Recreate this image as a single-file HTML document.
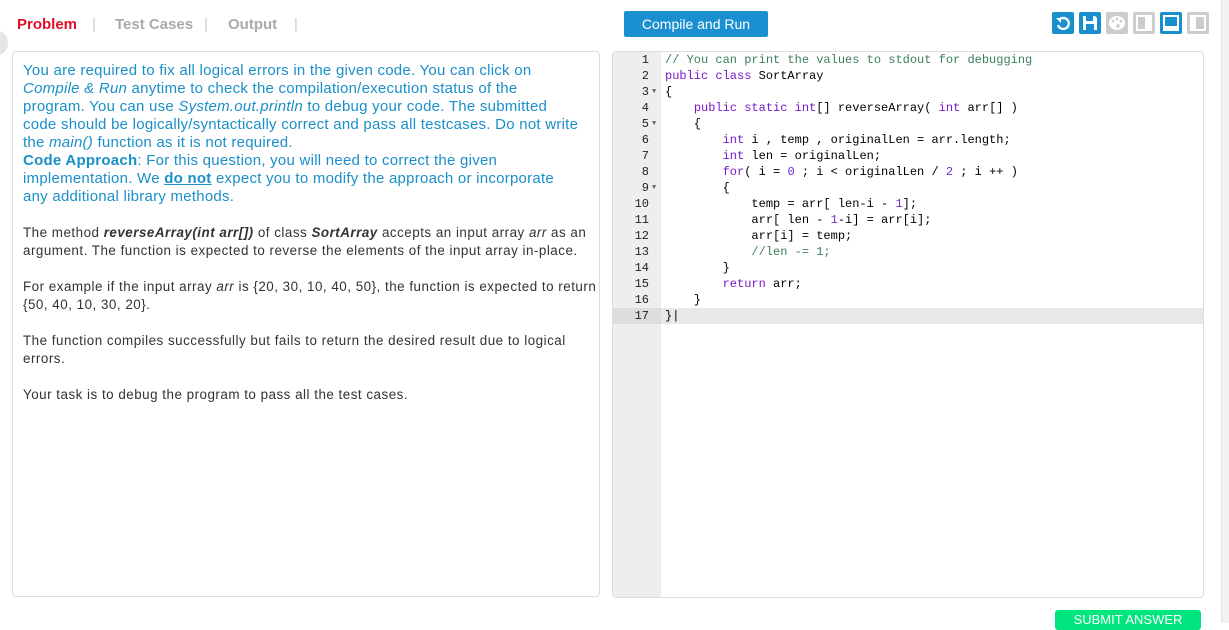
<!DOCTYPE html>
<html><head><meta charset="utf-8"><style>
*{margin:0;padding:0;box-sizing:border-box}
body{width:1229px;height:623px;overflow:hidden;background:#fff;font-family:"Liberation Sans",sans-serif;position:relative}
.tabs{position:absolute;top:16px;left:17px;font-size:15px;font-weight:bold;color:#aaa}
.tabs span{position:absolute;white-space:nowrap}
.sep{color:#ccc;font-weight:normal}
.circ{position:absolute;left:-18px;top:30px;width:26px;height:26px;border-radius:50%;background:#e6e6e6}
.btn{position:absolute;left:624px;top:11px;width:144px;height:26px;background:#1a90d0;color:#fff;font-size:14px;text-align:center;line-height:26px;border-radius:2px}
.ic{position:absolute;top:12px;width:22px;height:22px;border-radius:2px}
.left{position:absolute;left:12px;top:51px;width:588px;height:546px;border:1px solid #ddd;border-radius:4px}
.txt{position:absolute;left:23px;top:62px;font-size:15px;line-height:18px;color:#1a8fc8;white-space:nowrap;letter-spacing:0.25px}
.txt2{position:absolute;left:23px;top:224px;font-size:13.4px;line-height:18px;color:#333;white-space:nowrap;letter-spacing:0.5px}
.ed{position:absolute;left:612px;top:51px;width:592px;height:547px;border:1px solid #ddd;border-radius:4px;overflow:hidden;background:#fff}
.gut{position:absolute;left:0;top:0;width:48px;height:100%;background:#eee}
.code{position:absolute;left:0;top:0;width:100%;font-family:"Liberation Mono",monospace;font-size:12px;line-height:16px;color:#000}
.ln{height:16px;position:relative;white-space:pre}
.n{position:absolute;left:0;width:36px;text-align:right;color:#222}
.f{position:absolute;left:39px;font-size:7px;color:#666}
.c{position:absolute;left:52px;color:#000}
.k{color:#7a18c9}.cm{color:#3b7f5b}.nm{color:#6a2fd6}
.hl{background:#e8e8e8}
.hl .n{background:#ddd}
.sub{position:absolute;left:1055px;top:610px;width:146px;height:20px;background:#00e57e;border-radius:3px;color:#fff;font-size:13px;text-align:center;line-height:20px}
.rb{position:absolute;left:1221px;top:0;width:8px;height:623px;background:#f2f2f2;border-left:1px solid #e2e2e2}
</style></head><body>
<div class="circ"></div>
<div class="tabs">
<span style="left:0;color:#e0102a">Problem</span>
<span class="sep" style="left:75px">|</span>
<span style="left:98px">Test Cases</span>
<span class="sep" style="left:187px">|</span>
<span style="left:211px">Output</span>
<span class="sep" style="left:277px">|</span>
</div>
<div class="btn">Compile and Run</div>
<div class="ic" style="left:1052px;background:#1a8fd0"><svg width="22" height="22"><path d="M7 8 A5.5 5.5 0 1 1 6 13" fill="none" stroke="#fff" stroke-width="2.3"/><path d="M4 6 L9 6 L9 11 Z" fill="#fff"/></svg></div>
<div class="ic" style="left:1079px;background:#1a8fd0"><svg width="22" height="22"><path d="M4 4 H16 L18 6 V18 H4 Z" fill="#fff"/><rect x="7" y="4" width="7" height="5" fill="#1a8fd0"/><rect x="7" y="12" width="8" height="6" fill="#1a8fd0"/></svg></div>
<div class="ic" style="left:1106px;background:#ccc"><svg width="22" height="22"><ellipse cx="11" cy="11" rx="8" ry="7" fill="#fff"/><circle cx="7" cy="9" r="1.3" fill="#ccc"/><circle cx="11" cy="7" r="1.3" fill="#ccc"/><circle cx="15" cy="9" r="1.3" fill="#ccc"/><circle cx="12" cy="14" r="1.8" fill="#ccc"/></svg></div>
<div class="ic" style="left:1133px;background:#ccc"><svg width="22" height="22"><rect x="4" y="4" width="14" height="14" fill="none" stroke="#fff" stroke-width="2"/><rect x="12" y="4" width="6" height="14" fill="#fff"/></svg></div>
<div class="ic" style="left:1160px;background:#1a8fd0"><svg width="22" height="22"><rect x="4" y="4" width="14" height="14" fill="none" stroke="#fff" stroke-width="2"/><rect x="4" y="14" width="14" height="4" fill="#fff"/></svg></div>
<div class="ic" style="left:1187px;background:#ccc"><svg width="22" height="22"><rect x="4" y="4" width="14" height="14" fill="none" stroke="#fff" stroke-width="2"/><rect x="4" y="4" width="5" height="14" fill="#fff"/></svg></div>

<div class="left"></div>
<div class="txt">You are required to fix all logical errors in the given code. You can click on<br><i>Compile &amp; Run</i> anytime to check the compilation/execution status of the<br>program. You can use <i>System.out.println</i> to debug your code. The submitted<br>code should be logically/syntactically correct and pass all testcases. Do not write<br>the <i>main()</i> function as it is not required.<br><b>Code Approach</b>: For this question, you will need to correct the given<br>implementation. We <b><u>do not</u></b> expect you to modify the approach or incorporate<br>any additional library methods.</div>
<div class="txt2">The method <b><i>reverseArray(int arr[])</i></b> of class <b><i>SortArray</i></b> accepts an input array <i>arr</i> as an<br>argument. The function is expected to reverse the elements of the input array in-place.<br><br>For example if the input array <i>arr</i> is {20, 30, 10, 40, 50}, the function is expected to return<br>{50, 40, 10, 30, 20}.<br><br>The function compiles successfully but fails to return the desired result due to logical<br>errors.<br><br>Your task is to debug the program to pass all the test cases.</div>

<div class="ed"><div class="gut"></div>
<div class="code">
<div class="ln"><span class="n">1</span><span class="c cm">// You can print the values to stdout for debugging</span></div>
<div class="ln"><span class="n">2</span><span class="c"><span class="k">public class</span> SortArray</span></div>
<div class="ln"><span class="n">3</span><span class="f">▼</span><span class="c">{</span></div>
<div class="ln"><span class="n">4</span><span class="c">    <span class="k">public static int</span>[] reverseArray( <span class="k">int</span> arr[] )</span></div>
<div class="ln"><span class="n">5</span><span class="f">▼</span><span class="c">    {</span></div>
<div class="ln"><span class="n">6</span><span class="c">        <span class="k">int</span> i , temp , originalLen = arr.length;</span></div>
<div class="ln"><span class="n">7</span><span class="c">        <span class="k">int</span> len = originalLen;</span></div>
<div class="ln"><span class="n">8</span><span class="c">        <span class="k">for</span>( i = <span class="nm">0</span> ; i &lt; originalLen / <span class="nm">2</span> ; i ++ )</span></div>
<div class="ln"><span class="n">9</span><span class="f">▼</span><span class="c">        {</span></div>
<div class="ln"><span class="n">10</span><span class="c">            temp = arr[ len-i - <span class="nm">1</span>];</span></div>
<div class="ln"><span class="n">11</span><span class="c">            arr[ len - <span class="nm">1</span>-i] = arr[i];</span></div>
<div class="ln"><span class="n">12</span><span class="c">            arr[i] = temp;</span></div>
<div class="ln"><span class="n">13</span><span class="c cm">            //len -= 1;</span></div>
<div class="ln"><span class="n">14</span><span class="c">        }</span></div>
<div class="ln"><span class="n">15</span><span class="c">        <span class="k">return</span> arr;</span></div>
<div class="ln"><span class="n">16</span><span class="c">    }</span></div>
<div class="ln hl"><span class="n" style="width:48px;padding-right:12px">17</span><span class="c">}|</span></div>
</div></div>
<div class="sub">SUBMIT ANSWER</div>
<div class="rb"></div>
</body></html>
